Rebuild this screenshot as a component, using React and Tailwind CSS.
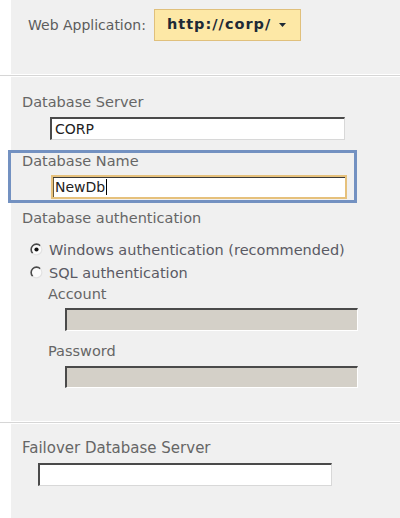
import React from 'react'

function Radio({ checked }) {
  return (
    <svg width="13" height="13" viewBox="0 0 13 13" className="shrink-0 mt-px">
      <circle cx="6.5" cy="6.5" r="5.3" fill="#fbfbfb" />
      <path d="M10.3 2.7 A5.3 5.3 0 0 0 2.7 10.3" stroke="#4a4a4a" strokeWidth="1.6" fill="none" />
      <path d="M10.3 2.7 A5.3 5.3 0 0 1 2.7 10.3" stroke="#e2e2e2" strokeWidth="1.2" fill="none" />
      {checked && <circle cx="6.5" cy="6.5" r="2.1" fill="#111" />}
    </svg>
  )
}

function Field({ className = '', disabled, children }) {
  const bg = disabled ? 'bg-[#d4d0c8] border-r-white border-b-white' : 'bg-white border-r-[#d8d8d8] border-b-[#d8d8d8]'
  return (
    <div className={`flex items-center pl-[3px] text-[14px] text-[#222] border-t-2 border-l-2 border-r border-b border-t-[#4a4a4a] border-l-[#4a4a4a] ${bg} ${className}`}>
      {children}
    </div>
  )
}

function Separator() {
  return <div className="h-px my-px bg-[#d6d6d6]" />
}

export default function App() {
  return (
    <div className="w-[400px] h-[518px] overflow-hidden bg-white flex flex-col font-['DejaVu_Sans',sans-serif] text-[14.5px] text-[#666]">
      {/* web application picker */}
      <div className="ml-[11px] h-[74px] shrink-0 bg-[#f0f0f0] flex items-start pt-[9px] pl-[17px]">
        <span className="mt-[8px] text-[14px] leading-[17px] text-[#5c5c5c]">Web Application:</span>
        <button className="ml-[8px] w-[147px] h-[32px] flex items-center pl-[12px] pb-[2px] bg-[#fde8a6] border border-[#e0c07c] text-[14.5px] leading-[17px] font-bold tracking-[1px] text-[#1e2a36]">
          http://corp/
          <svg width="7" height="4" viewBox="0 0 7 4" className="ml-[8px] mt-[2px]">
            <path d="M0 0 H7 L3.5 4 Z" fill="#1e2a36" />
          </svg>
        </button>
      </div>

      <Separator />

      {/* database settings */}
      <div className="ml-[11px] h-[344px] shrink-0 bg-[#f0f0f0] flex flex-col items-start pl-[11px] pt-[17px]">
        <div className="leading-[17px]">Database Server</div>
        <Field className="mt-[6px] ml-[28px] w-[295px] h-[23px]">CORP</Field>

        <div className="mt-[10px] -ml-[14px] w-[349px] border-[3px] border-[#7391c1] pl-[11px] pb-px">
          <div className="leading-[16px]">Database Name</div>
          <div className="mt-[6px] ml-[29px] w-[296px] h-[24px] flex items-center pl-[2px] bg-white border-2 border-[#e6c17c] shadow-[inset_0_1px_0_#3a3a3a,inset_1px_0_0_#6a5a3a] text-[14px] text-[#222]">
            NewDb
            <span className="ml-px w-px h-[16px] bg-black" />
          </div>
        </div>

        <div className="mt-[7px] leading-[17px]">Database authentication</div>

        <div className="mt-[15px] ml-[8px] flex items-start gap-[6px] leading-[17px] text-[#5a5a64]">
          <Radio checked />
          <span>Windows authentication (recommended)</span>
        </div>
        <div className="mt-[6px] ml-[8px] flex items-start gap-[6px] leading-[17px] text-[#5a5a64]">
          <Radio />
          <span>SQL authentication</span>
        </div>

        <div className="mt-[4px] ml-[26px] leading-[17px]">Account</div>
        <Field disabled className="mt-[5px] ml-[43px] w-[293px] h-[23px]" />

        <div className="mt-[12px] ml-[26px] leading-[17px]">Password</div>
        <Field disabled className="mt-[6px] ml-[43px] w-[293px] h-[22px]" />
      </div>

      <Separator />

      {/* failover */}
      <div className="ml-[11px] flex-1 bg-[#f0f0f0] flex flex-col items-start pl-[11px] pt-[16px]">
        <div className="leading-[17px] text-[15px]">Failover Database Server</div>
        <Field className="mt-[6px] ml-[16px] w-[294px] h-[23px]" />
      </div>
    </div>
  )
}
